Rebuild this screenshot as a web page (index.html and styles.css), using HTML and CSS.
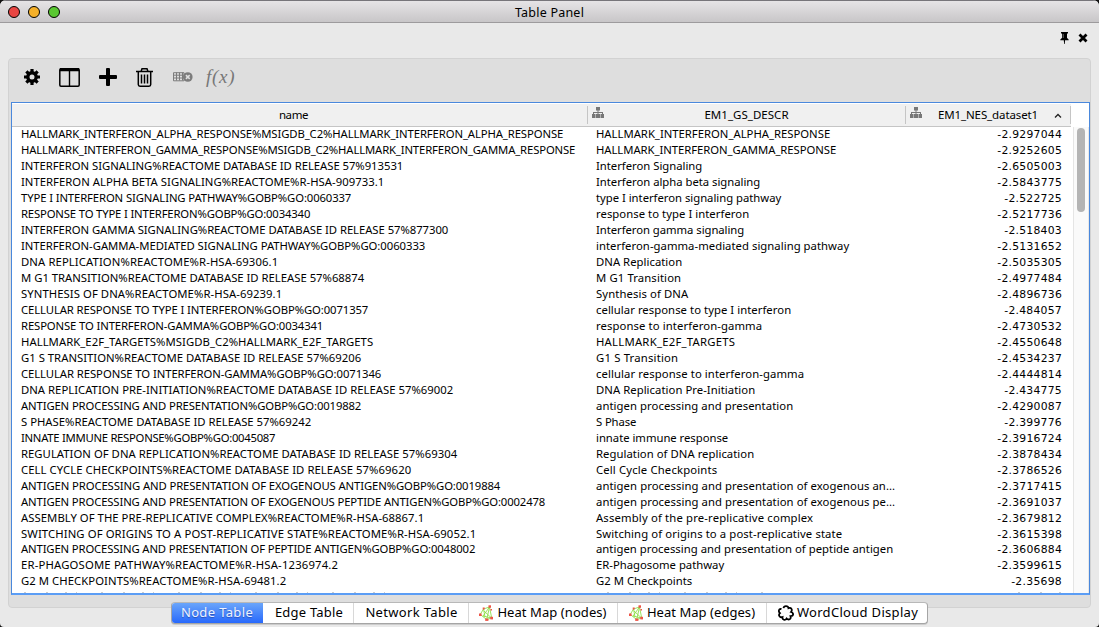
FILE: index.html
```html
<!DOCTYPE html>
<html lang="en">
<head>
<meta charset="utf-8">
<title>Table Panel</title>
<link rel="stylesheet" href="styles.css">
</head>
<body>
<svg class="defs" width="0" height="0">
  <symbol id="tree" viewBox="0 0 12 11"><path d="M4 0h4v3.500H6.500V5H11v2h1v4H8.500V7H10V6H6.500v1H8v4H4V7h1.500V6H2v1h1.500v4H0V7h1V5h4.500V3.500H4z" fill="#777"/></symbol>
  <symbol id="network" viewBox="0 0 14 16"><path d="M10.500 2 4.500 4 1.200 9.500l6.500 5 5-1.500zM4.500 4 6 12M10.500 2 4 11l8.500 2L5 6M10.500 2 7.700 14.500" fill="none" stroke="#8ee04a" stroke-width=".9"/><g fill="#ee5547"><rect x="9.500" y=".3" width="2.500" height="2.500"/><rect x="3.700" y="2.500" width="2" height="2"/><rect y="8.500" width="2.600" height="2.500"/><rect x="6.200" y="13.500" width="3.200" height="2.400"/><rect x="11.300" y="11.800" width="2.700" height="2.600"/><rect x="11.500" y="4" width="1.500" height="1.500"/></g></symbol>
</svg>
<div class="window">
  <header class="titlebar"><div class="lights"><i class="red"></i><i class="yellow"></i><i class="green"></i></div><span class="fit" data-w="69">Table Panel</span></header>
  <div class="panel-controls">
    <svg width="9" height="13" viewBox="0 0 9 13"><path d="M1 0h7v1.500H7V6c1 .5 1.700 1.200 1.700 2.200H5.100L4.700 12h-.6l-.3-3.800H.3C.3 7.200 1 6.500 2 6V1.500H1z"/><path d="M3.200 2v4" stroke="#bbb" stroke-width=".6"/></svg>
    <svg width="10" height="10" viewBox="0 0 10 10"><path d="m1.500 1.500 7 7m0-7-7 7" stroke="#000" stroke-width="2.800"/></svg>
  </div>
  <main class="panel">
    <div class="toolbar">
      <svg class="gear" width="16" height="16" viewBox="0 0 16 16"><circle cx="8" cy="8" r="4.200" fill="none" stroke="#000" stroke-width="3.400"/><path d="M8 0v3.500M8 12.500V16M0 8h3.500M12.500 8H16M2.350 2.350l2.500 2.500M11.150 11.150l2.500 2.500M13.650 2.350l-2.500 2.500M4.850 11.150l-2.500 2.500" stroke="#000" stroke-width="3.200"/></svg>
      <svg class="columns" width="21" height="19" viewBox="0 0 21 19"><rect x=".8" y=".8" width="19.400" height="17.400" rx="1.200" fill="none" stroke="#000" stroke-width="1.500"/><path d="M1 0h19v3.300H1zM9.800 2h1.400v16H9.800z"/></svg>
      <svg class="plus" width="18" height="18" viewBox="0 0 18 18"><path d="M7 1q0-1 1-1h2q1 0 1 1v6h6q1 0 1 1v2q0 1-1 1h-6v6q0 1-1 1H8q-1 0-1-1v-6H1q-1 0-1-1V8q0-1 1-1h6z"/></svg>
      <svg class="trash" width="17" height="19" viewBox="0 0 17 19"><path d="M0 3.500h17M5 3.500 6 .8h5l1 2.700M2.300 4v12.500q0 1.700 1.700 1.700h9q1.700 0 1.700-1.700V4M5.500 6.500v9M8.500 6.500v9M11.500 6.500v9" fill="none" stroke="#000" stroke-width="1.500"/></svg>
      <svg class="deltable" width="20" height="10" viewBox="0 0 20 10"><path d="M.5.700h10.500v8.100H.5zM.5 3.200h10M.5 6h10M3.500.5v8M6.500.5v8M9.500.5v8" fill="none" stroke="#7c7c7c"/><circle cx="14.800" cy="5" r="4.800" fill="#7c7c7c"/><path d="m12.900 3.100 3.800 3.800m0-3.800-3.800 3.800" stroke="#dedede" stroke-width="1.500"/></svg>
      <span class="fx fit" data-w="29">f(x)</span>
    </div>
    <section class="table">
      <div class="thead">
        <div class="th"><span class="fit" data-w="29">name</span></div>
        <div class="th"><svg class="tree" width="12" height="11"><use href="#tree"/></svg><span class="fit" data-w="84">EM1_GS_DESCR</span></div>
        <div class="th last"><svg class="tree" width="12" height="11"><use href="#tree"/></svg><span class="fit" data-w="100">EM1_NES_dataset1</span><svg class="sort" width="8" height="5" viewBox="0 0 8 5"><path d="m1 4.500 3-3 3 3" fill="none" stroke="#222" stroke-width="1.300"/></svg></div>
      </div>
      <div class="body"><div class="rows" id="rows"></div><div class="scroll"><div class="thumb"></div></div></div>
    </section>
  </main>
  <nav class="tabs">
    <div class="tab active"><span class="fit" data-w="72">Node Table</span></div>
    <div class="tab edge"><span class="fit" data-w="68">Edge Table</span></div>
    <div class="tab net"><span class="fit" data-w="92">Network Table</span></div>
    <div class="tab heat"><svg width="14" height="16"><use href="#network"/></svg><span class="fit" data-w="109">Heat Map (nodes)</span></div>
    <div class="tab heat"><svg width="14" height="16"><use href="#network"/></svg><span class="fit" data-w="108">Heat Map (edges)</span></div>
    <div class="tab cloud"><svg width="16" height="16" viewBox="0 0 16 16"><path d="M5.500 3.200C5.800.3 10.200.3 10.500 3.200c2.800-1 4.300 1.500 2.500 3.800 3 .8 2.800 4.200-.5 4.200 1 3-2 4.300-3.800 2.300C7.200 15.800 4 15 4.500 12 1.500 13 0 10 2 8.200-.2 6 1.200 3.200 3.500 4.200" fill="none" stroke="#000" stroke-width="1.800"/></svg><span class="fit" data-w="121">WordCloud Display</span></div>
  </nav>
</div>
<script src="table.js"></script>
</body>
</html>
```
FILE: styles.css
```css
* { box-sizing: border-box; }
body { margin: 0; background: #111; font-family: "Noto Sans", "Open Sans", sans-serif; color: #000; overflow: hidden; }
.defs { position: absolute; }
.window { width: 1099px; height: 627px; display: flex; flex-direction: column; background: #e9e9e9; border-radius: 6px 6px 4px 4px; overflow: hidden; }
.titlebar { height: 23px; flex: none; display: grid; grid-template-columns: 1fr auto 1fr; align-items: center; background: linear-gradient(#e6e4e6, #c8c6c8); border-top: 1px solid #77757a; border-bottom: 1px solid #9d9b9d; font-size: 12.5px; line-height: 20px; padding-top: 1px; }
.titlebar .fit { padding-top: 1px; line-height: 19px; }
.lights { display: flex; gap: 8px; padding-left: 8px; }
.lights i { width: 12px; height: 12px; border-radius: 50%; border: 1px solid; }
.red { background: #e94643; border-color: #d43f3c; }
.yellow { background: #f5b029; border-color: #dc9c25; }
.green { background: #5ac832; border-color: #4bb329; }
.panel-controls { height: 35px; flex: none; display: flex; justify-content: flex-end; gap: 9px; padding: 9px 11px 0 0; }
.panel-controls svg:last-child { margin-top: 1px; }
.panel { margin: 0 8px; height: 550px; flex: none; background: #dedede; border: 1px solid #d2d2d2; border-radius: 4px; padding: 0 1px 0 2px; }
.toolbar { height: 43px; display: flex; align-items: center; padding: 0 0 7px 13px; }
.columns { margin-left: 19px; }
.plus { margin: 0 0 1px 19px; }
.trash { margin-left: 19px; }
.deltable { margin: 0 0 1px 20px; }
.fx { margin: 0 0 1px 13px; font: italic 19px/22px "Liberation Serif", serif; color: #777; }
.fit { white-space: pre; display: inline-block; }
.table { height: 493px; width: 1079px; border: 1px solid #4a88dc; border-bottom: 2px solid #5b9df5; background: #fff; display: flex; flex-direction: column; overflow: hidden; }
.thead { height: 24px; width: 1059px; flex: none; background: #f0f0f0; border-bottom: 1px solid #c5c5c5; border-top: 1px solid #fff; display: grid; grid-template-columns: 576px 318px 165px; padding: 2px 0; font-size: 11.5px; }
.th { border-right: 1px solid #c5c5c5; display: grid; align-items: center; justify-items: center; grid-template-columns: 1fr; line-height: 18px; }
.th > * { grid-area: 1 / 1; }
.th:first-child { padding-right: 12px; }
.tree { justify-self: start; align-self: start; margin: 1px 0 0 4px; }
.sort { justify-self: end; margin-right: 8px; }
.body { flex: 1; min-height: 0; display: flex; }
.rows { width: 1061px; overflow: hidden; font-size: 11.3px; }
.row { display: grid; grid-template-columns: 575px 309px 157px; height: 16px; line-height: 14.5px; padding-left: 9px; }
.row:nth-child(26) { height: 15px; }
.nes { text-align: right; font-family: "DejaVu Sans", sans-serif; font-size: 10.8px; padding-top: 1px; }
.cut { display: block; margin: 2px 0 0 12px; }
.scroll { flex: 1; background: #fafafa; border-left: 1px solid #e5e5e5; border-right: 1px solid #e8e8e8; display: flex; justify-content: center; padding-top: 1px; }
.thumb { width: 8px; height: 84px; border-radius: 4px; background: #b4b4b4; }
.tabs { align-self: flex-start; margin: -6px 0 0 171px; height: 22px; width: 757px; display: flex; background: #fff; border: 1px solid #a5a5a5; border-top-color: #b8b8b8; border-radius: 4px; overflow: hidden; font-size: 13px; line-height: 18px; box-shadow: 0 1px 0 #ccc; flex: none; }
.tab { display: flex; align-items: center; justify-content: center; border-right: 1px solid #d8d8d8; }
.tab .fit { margin-top: -2px; }
.tab:last-child { border: 0; }
.active { width: 92px; background: linear-gradient(#6aa5fa, #2869fc); color: #eef3ff; text-shadow: 0 1px 1px rgba(0, 0, 60, .35); border: 0; margin-left: -1px; }
.edge { width: 91px; padding-left: 2px; }
.net { width: 115px; padding-left: 1px; }
.heat { width: 149px; gap: 4px; }
.cloud { flex: 1; gap: 3px; padding-left: 2px; }
```
FILE: table.js
```js
// [name, right edge, description, right edge, score]
const data = [
["HALLMARK_INTERFERON_ALPHA_RESPONSE%MSIGDB_C2%HALLMARK_INTERFERON_ALPHA_RESPONSE",563,"HALLMARK_INTERFERON_ALPHA_RESPONSE",830,"-2.9297044"],
["HALLMARK_INTERFERON_GAMMA_RESPONSE%MSIGDB_C2%HALLMARK_INTERFERON_GAMMA_RESPONSE",575,"HALLMARK_INTERFERON_GAMMA_RESPONSE",836,"-2.9252605"],
["INTERFERON SIGNALING%REACTOME DATABASE ID RELEASE 57%913531",403,"Interferon Signaling",702,"-2.6505003"],
["INTERFERON ALPHA BETA SIGNALING%REACTOME%R-HSA-909733.1",384,"Interferon alpha beta signaling",760,"-2.5843775"],
["TYPE I INTERFERON SIGNALING PATHWAY%GOBP%GO:0060337",351,"type I interferon signaling pathway",781,"-2.522725"],
["RESPONSE TO TYPE I INTERFERON%GOBP%GO:0034340",310,"response to type I interferon",749,"-2.5217736"],
["INTERFERON GAMMA SIGNALING%REACTOME DATABASE ID RELEASE 57%877300",448,"Interferon gamma signaling",744,"-2.518403"],
["INTERFERON-GAMMA-MEDIATED SIGNALING PATHWAY%GOBP%GO:0060333",425,"interferon-gamma-mediated signaling pathway",849,"-2.5131652"],
["DNA REPLICATION%REACTOME%R-HSA-69306.1",278,"DNA Replication",682,"-2.5035305"],
["M G1 TRANSITION%REACTOME DATABASE ID RELEASE 57%68874",364,"M G1 Transition",681,"-2.4977484"],
["SYNTHESIS OF DNA%REACTOME%R-HSA-69239.1",282,"Synthesis of DNA",688,"-2.4896736"],
["CELLULAR RESPONSE TO TYPE I INTERFERON%GOBP%GO:0071357",368,"cellular response to type I interferon",791,"-2.484057"],
["RESPONSE TO INTERFERON-GAMMA%GOBP%GO:0034341",323,"response to interferon-gamma",762,"-2.4730532"],
["HALLMARK_E2F_TARGETS%MSIGDB_C2%HALLMARK_E2F_TARGETS",373,"HALLMARK_E2F_TARGETS",735,"-2.4550648"],
["G1 S TRANSITION%REACTOME DATABASE ID RELEASE 57%69206",361,"G1 S Transition",678,"-2.4534237"],
["CELLULAR RESPONSE TO INTERFERON-GAMMA%GOBP%GO:0071346",381,"cellular response to interferon-gamma",804,"-2.4444814"],
["DNA REPLICATION PRE-INITIATION%REACTOME DATABASE ID RELEASE 57%69002",453,"DNA Replication Pre-Initiation",755,"-2.434775"],
["ANTIGEN PROCESSING AND PRESENTATION%GOBP%GO:0019882",361,"antigen processing and presentation",793,"-2.4290087"],
["S PHASE%REACTOME DATABASE ID RELEASE 57%69242",311,"S Phase",636,"-2.399776"],
["INNATE IMMUNE RESPONSE%GOBP%GO:0045087",275,"innate immune response",728,"-2.3916724"],
["REGULATION OF DNA REPLICATION%REACTOME DATABASE ID RELEASE 57%69304",457,"Regulation of DNA replication",754,"-2.3878434"],
["CELL CYCLE CHECKPOINTS%REACTOME DATABASE ID RELEASE 57%69620",411,"Cell Cycle Checkpoints",717,"-2.3786526"],
["ANTIGEN PROCESSING AND PRESENTATION OF EXOGENOUS ANTIGEN%GOBP%GO:0019884",500,"antigen processing and presentation of exogenous an...",895,"-2.3717415"],
["ANTIGEN PROCESSING AND PRESENTATION OF EXOGENOUS PEPTIDE ANTIGEN%GOBP%GO:0002478",545,"antigen processing and presentation of exogenous pe...",895,"-2.3691037"],
["ASSEMBLY OF THE PRE-REPLICATIVE COMPLEX%REACTOME%R-HSA-68867.1",424,"Assembly of the pre-replicative complex",813,"-2.3679812"],
["SWITCHING OF ORIGINS TO A POST-REPLICATIVE STATE%REACTOME%R-HSA-69052.1",476,"Switching of origins to a post-replicative state",842,"-2.3615398"],
["ANTIGEN PROCESSING AND PRESENTATION OF PEPTIDE ANTIGEN%GOBP%GO:0048002",475,"antigen processing and presentation of peptide antigen",893,"-2.3606884"],
["ER-PHAGOSOME PATHWAY%REACTOME%R-HSA-1236974.2",338,"ER-Phagosome pathway",724,"-2.3599615"],
["G2 M CHECKPOINTS%REACTOME%R-HSA-69481.2",286,"G2 M Checkpoints",692,"-2.35698"]
];
const cell = (text, width) => `<div><span class="fit" data-w="${width}">${text}</span></div>`;
document.getElementById("rows").innerHTML = data.map(([n, nr, d, dr, s]) =>
  `<div class="row">${cell(n, nr - 21)}${cell(d, dr - 596)}<div class="nes"><span class="fit" data-w="${s.length * 6.95 - 5}">${s}</span></div></div>`).join("")
  // Tops of the letters in the row that the table edge cuts off.
  + `<svg class="cut" width="1045" height="1"><path d="M0 .5h380M583 .5h160M994 .5h50" stroke="#ccc" stroke-dasharray="2 20 2 17 2 9 1 24"/></svg>`;
document.querySelectorAll(".fit").forEach(el => {
  const extra = (Number(el.dataset.w) + .2 - el.getBoundingClientRect().width) / el.textContent.length;
  el.style.letterSpacing = extra.toFixed(3) + "px";
});
```
